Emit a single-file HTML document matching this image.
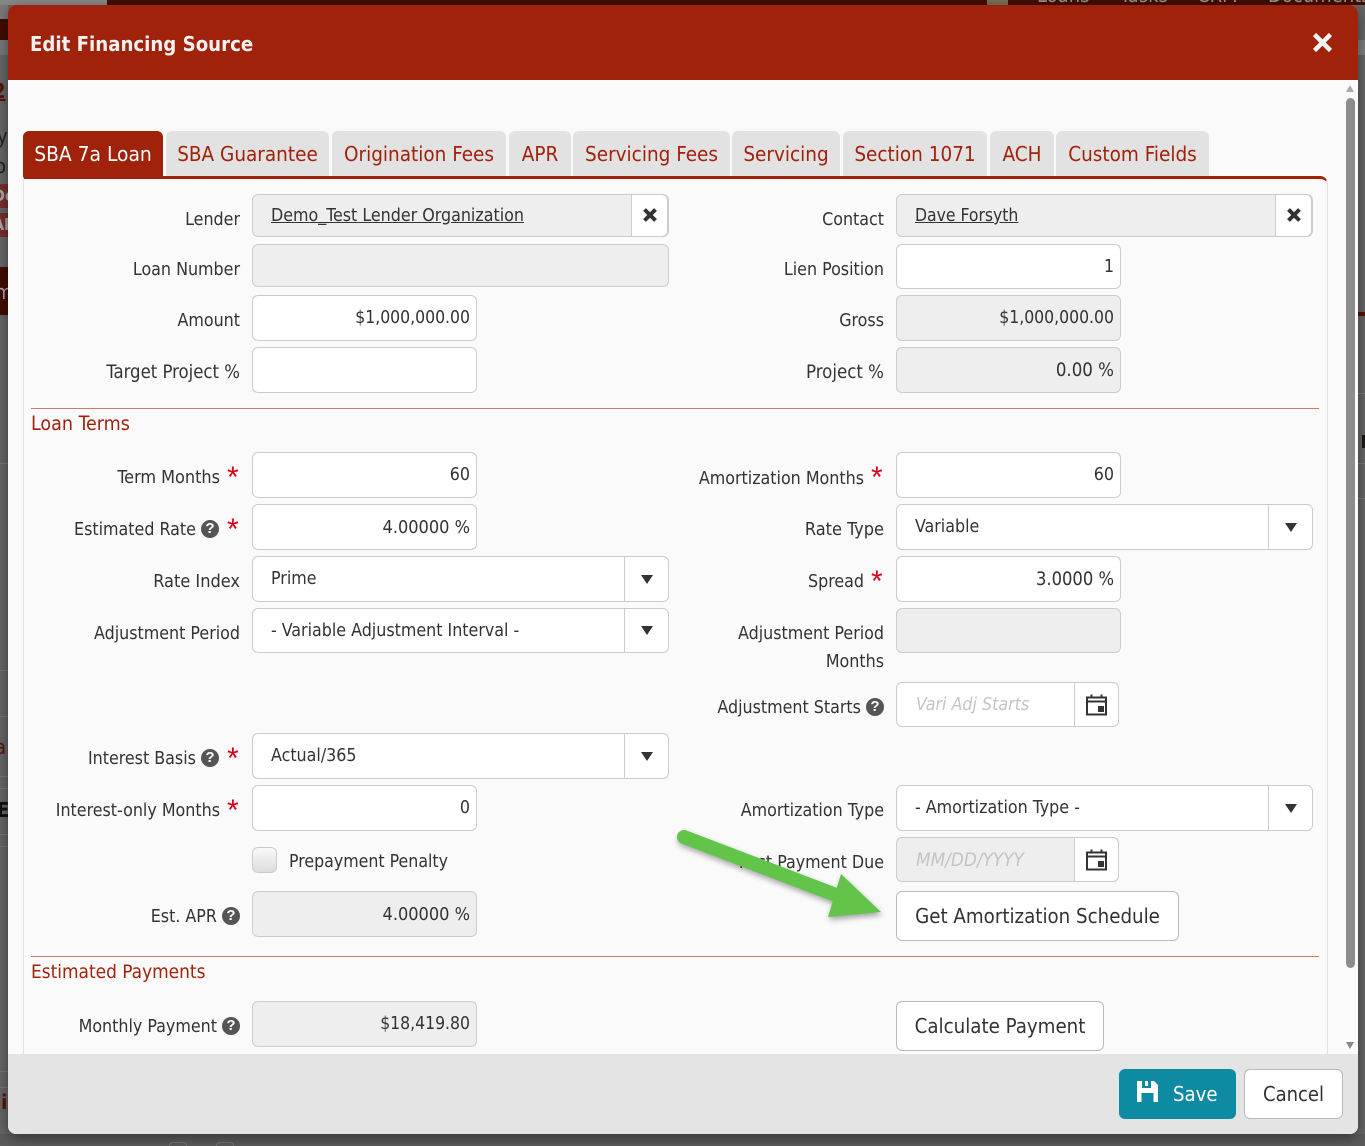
<!DOCTYPE html>
<html><head><meta charset="utf-8"><title>Edit Financing Source</title>
<style>
html,body{margin:0;padding:0;width:1365px;height:1146px;overflow:hidden;background:#666}
*{box-sizing:border-box}
body{position:relative;font-family:"DejaVu Sans Condensed","DejaVu Sans","Liberation Sans",sans-serif;font-stretch:condensed;font-size:17.700px;color:#333}
.a{position:absolute}
.l{position:absolute;text-align:right;white-space:nowrap;height:24px;line-height:24px;color:#333}
.lc{left:20px;width:220px}
.rc{left:640px;width:244px}
.f{position:absolute;background:#fff;border:1px solid #ccc;border-radius:6px;line-height:45px;padding:0 6px;white-space:nowrap}
.r{text-align:right}
.d{background:#eee}
.q{display:inline-block;width:18px;height:18px;border-radius:50%;background:#555;color:#fff;font:bold 15px/18px "Liberation Sans",sans-serif;text-align:center;vertical-align:2px;font-stretch:normal}
.s{position:absolute;color:#d9001b;font:30px/30px "Liberation Sans",sans-serif;font-stretch:normal;margin-top:-4px;margin-left:-1px}
.t{position:absolute;top:131px;height:45px;background:#e2e2e2;border-radius:6px 6px 0 0;color:#a0220a;font-size:20.500px;line-height:47px;text-align:center;white-space:nowrap}
.h{position:absolute;left:31px;color:#a0220a;font-size:19px;line-height:24px;white-space:nowrap}
.hr{position:absolute;left:31px;width:1288px;height:1px;background:#d27a68}
.sep{position:absolute;top:0;bottom:0;width:1px;background:#ccc}
.tri{position:absolute;width:0;height:0;border-left:6.500px solid transparent;border-right:6.500px solid transparent;border-top:9px solid #333}
.b{position:absolute;background:#fff;border:1px solid #bbb;border-radius:6px;text-align:center;color:#333;font-size:20.300px;white-space:nowrap}
.bg{position:absolute;white-space:nowrap;line-height:20px}
.ln{position:absolute;left:0;width:8px;height:1px;background:#7c7c7c}
.rn{position:absolute;left:1358px;width:7px;height:1px;background:#7c7c7c}
</style></head><body>

<!-- backdrop -->
<div class="a" style="left:0;top:0;width:107px;height:5px;background:#888"></div>
<div class="a" style="left:107px;top:0;width:1258px;height:5px;background:#420c02"></div>
<div class="a" style="left:987px;top:0;width:21px;height:5px;background:#7a7058"></div>
<div class="bg" style="left:1037px;top:-15px;color:#9c948a;font-size:20px">Loans</div>
<div class="bg" style="left:1120px;top:-15px;color:#9c948a;font-size:20px">Tasks</div>
<div class="bg" style="left:1197px;top:-15px;color:#9c948a;font-size:20px">CRM</div>
<div class="bg" style="left:1268px;top:-15px;color:#9c948a;font-size:20px">Documents</div>
<div class="a" style="left:0;top:5px;width:8px;height:50px;background:#7a7a7a"></div>
<div class="a" style="left:0;top:19px;width:8px;height:21px;background:#420c02"></div>
<div class="a" style="left:0;top:184px;width:8px;height:24px;background:#7a2f2a"></div>
<div class="a" style="left:0;top:213px;width:8px;height:24px;background:#7a2f2a"></div>
<div class="a" style="left:0;top:267px;width:8px;height:48px;background:#420c02"></div>
<div class="bg" style="left:-7px;top:81px;color:#5a1208;font-weight:bold;text-decoration:underline;font-size:20px">2</div>
<div class="bg" style="left:-3px;top:126px;color:#222;font-size:20px">y</div>
<div class="bg" style="left:-5px;top:156px;color:#222;font-size:20px">o</div>
<div class="bg" style="left:-7px;top:186px;color:#aaa;font-size:16px;font-weight:bold">De</div>
<div class="bg" style="left:-7px;top:215px;color:#aaa;font-size:16px;font-weight:bold">Al</div>
<div class="bg" style="left:-5px;top:282px;color:#aaa;font-size:20px">m</div>
<div class="bg" style="left:-5px;top:737px;color:#5a1208;font-size:20px">a</div>
<div class="bg" style="left:-3px;top:800px;color:#111;font-size:20px;font-weight:bold">E</div>
<div class="bg" style="left:-5px;top:1092px;color:#5a1208;font-size:20px;font-weight:bold">ii</div>
<div class="ln" style="top:463px"></div><div class="ln" style="top:670px"></div><div class="ln" style="top:716px"></div><div class="ln" style="top:776px"></div><div class="ln" style="top:788px"></div><div class="ln" style="top:834px"></div><div class="ln" style="top:846px"></div><div class="ln" style="top:1071px"></div><div class="ln" style="top:1087px"></div>
<div class="a" style="left:1358px;top:40px;width:7px;height:15px;background:#808080"></div>
<div class="a" style="left:1358px;top:312px;width:7px;height:4px;background:#5a1208"></div>
<div class="rn" style="top:393px"></div><div class="rn" style="top:463px"></div><div class="rn" style="top:498px"></div>
<div class="a" style="left:1362px;top:435px;width:3px;height:13px;background:#1c1a18"></div>
<div class="a" style="left:0;top:1134px;width:1365px;height:12px;background:#5c5c5c"></div>
<div class="a" style="left:169px;top:1142px;width:18px;height:4px;border:1px solid #777;border-bottom:0;border-radius:5px 5px 0 0"></div>
<div class="a" style="left:216px;top:1142px;width:18px;height:4px;border:1px solid #777;border-bottom:0;border-radius:5px 5px 0 0"></div>

<!-- modal -->
<div class="a" style="left:8px;top:5px;width:1350px;height:1129px;background:#fafafa;border-radius:8px;overflow:hidden;box-shadow:0 4px 14px rgba(0,0,0,.45)">
  <div class="a" style="left:0;top:0;width:1350px;height:75px;background:#a0220a"></div>
  <div class="a" style="left:22px;top:25px;color:#f2f2f2;font-size:20.200px;font-weight:bold;line-height:28px;white-space:nowrap">Edit Financing Source</div>
  <div class="a" style="left:0;top:1049px;width:1350px;height:80px;background:#e4e4e4"></div>
</div>
<svg class="a" style="left:1312px;top:32px" width="21" height="21" viewBox="0 0 21 21"><path d="M2.500 2.500L18.500 18.500M18.500 2.500L2.500 18.500" stroke="#f4f4f4" stroke-width="4.500"/></svg>

<!-- scrollbar -->
<div class="a" style="left:1346px;top:98px;width:9px;height:870px;background:#8c8c8c;border-radius:5px"></div>
<div class="a" style="left:1346px;top:85px;width:0;height:0;border-left:4.500px solid transparent;border-right:4.500px solid transparent;border-bottom:7px solid #aaa"></div>
<div class="a" style="left:1346px;top:1042px;width:0;height:0;border-left:4.500px solid transparent;border-right:4.500px solid transparent;border-top:7px solid #888"></div>

<!-- panel -->
<div class="a" style="left:23px;top:176px;width:1305px;height:878px;border:1px solid #e2e2e2;border-top:3px solid #a0220a;border-bottom:0;border-radius:0 8px 0 0"></div>
<div class="t" style="left:23px;width:140px;height:46px;background:#a0220a;color:#fff;font-size:20.800px">SBA 7a Loan</div>
<div class="t" style="left:166px;width:163px">SBA Guarantee</div>
<div class="t" style="left:332px;width:174px">Origination Fees</div>
<div class="t" style="left:509px;width:62px">APR</div>
<div class="t" style="left:573px;width:157px">Servicing Fees</div>
<div class="t" style="left:732px;width:108px">Servicing</div>
<div class="t" style="left:843px;width:144px">Section 1071</div>
<div class="t" style="left:990px;width:64px">ACH</div>
<div class="t" style="left:1056px;width:153px">Custom Fields</div>

<!-- row: lender/contact -->
<div class="l lc" style="top:208px">Lender</div>
<div class="f d" style="left:252px;top:194px;width:417px;height:43px;padding-left:18px;line-height:43px"><u>Demo_Test Lender Organization</u><div class="a" style="right:0;top:-1px;width:37px;height:43px;background:#fff;border:1px solid #ccc;border-radius:0 6px 6px 0"></div></div>
<svg class="a" style="left:642px;top:207px" width="16" height="16" viewBox="0 0 16 16"><path d="M2.500 2.500L13.500 13.500M13.500 2.500L2.500 13.500" stroke="#333" stroke-width="4"/></svg>
<div class="l rc" style="top:208px">Contact</div>
<div class="f d" style="left:896px;top:194px;width:417px;height:43px;padding-left:18px;line-height:43px;font-size:17.400px"><u>Dave Forsyth</u><div class="a" style="right:0;top:-1px;width:37px;height:43px;background:#fff;border:1px solid #ccc;border-radius:0 6px 6px 0"></div></div>
<svg class="a" style="left:1286px;top:207px" width="16" height="16" viewBox="0 0 16 16"><path d="M2.500 2.500L13.500 13.500M13.500 2.500L2.500 13.500" stroke="#333" stroke-width="4"/></svg>

<div class="l lc" style="top:258px">Loan Number</div>
<div class="f d" style="left:252px;top:244px;width:417px;height:43px"></div>
<div class="l rc" style="top:258px">Lien Position</div>
<div class="f r" style="left:896px;top:244px;width:225px;height:45px;line-height:44px">1</div>

<div class="l lc" style="top:309px">Amount</div>
<div class="f r" style="left:252px;top:295px;width:225px;height:46px;font-size:17.450px">$1,000,000.00</div>
<div class="l rc" style="top:309px">Gross</div>
<div class="f r d" style="left:896px;top:295px;width:225px;height:46px;font-size:17.450px">$1,000,000.00</div>

<div class="l lc" style="top:361px;font-size:18.400px">Target Project %</div>
<div class="f" style="left:252px;top:347px;width:225px;height:46px"></div>
<div class="l rc" style="top:361px;font-size:18.500px">Project %</div>
<div class="f r d" style="left:896px;top:347px;width:225px;height:46px;font-size:18.500px">0.00 %</div>

<div class="hr" style="top:408px"></div>
<div class="h" style="top:412px;font-size:19.500px">Loan Terms</div>

<div class="l" style="left:20px;width:200px;top:466px;font-size:17.900px">Term Months</div><div class="s" style="left:228px;top:467px">*</div>
<div class="f r" style="left:252px;top:452px;width:225px;height:46px">60</div>
<div class="l" style="left:640px;width:224px;top:467px">Amortization Months</div><div class="s" style="left:872px;top:467px">*</div>
<div class="f r" style="left:896px;top:452px;width:225px;height:46px">60</div>

<div class="l" style="left:20px;width:199px;top:518px">Estimated Rate <span class="q">?</span></div><div class="s" style="left:228px;top:519px">*</div>
<div class="f r" style="left:252px;top:504px;width:225px;height:46px;font-size:18px">4.00000 %</div>
<div class="l rc" style="top:518px;font-size:18px">Rate Type</div>
<div class="f" style="left:896px;top:504px;width:417px;height:46px;padding-left:18px">Variable<div class="sep" style="right:43px"></div><div class="tri" style="right:15px;top:18px"></div></div>

<div class="l lc" style="top:570px;font-size:18px">Rate Index</div>
<div class="f" style="left:252px;top:556px;width:417px;height:46px;padding-left:18px">Prime<div class="sep" style="right:43px"></div><div class="tri" style="right:15px;top:18px"></div></div>
<div class="l" style="left:640px;width:224px;top:570px">Spread</div><div class="s" style="left:872px;top:571px">*</div>
<div class="f r" style="left:896px;top:556px;width:225px;height:46px;font-size:18.200px">3.0000 %</div>

<div class="l lc" style="top:622px">Adjustment Period</div>
<div class="f" style="left:252px;top:608px;width:417px;height:45px;padding-left:18px">- Variable Adjustment Interval -<div class="sep" style="right:43px"></div><div class="tri" style="right:15px;top:17px"></div></div>
<div class="l rc" style="top:622px">Adjustment Period</div>
<div class="l rc" style="top:650px">Months</div>
<div class="f d" style="left:896px;top:608px;width:225px;height:45px"></div>

<div class="l rc" style="top:696px">Adjustment Starts <span class="q">?</span></div>
<div class="f" style="left:896px;top:682px;width:223px;height:45px;padding-left:19px;color:#c4c4c4;font-style:italic;font-size:17.700px">Vari Adj Starts<div class="sep" style="right:43px"></div></div>
<svg class="a" style="left:1085px;top:693px" width="23" height="23" viewBox="0 0 23 23"><path d="M2 4.500H21V21.500H2ZM2 8.500H21M6.500 1.500V5M16.500 1.500V5" fill="none" stroke="#333" stroke-width="2"/><rect x="13" y="13" width="6" height="6" fill="#333"/></svg>

<div class="l" style="left:20px;width:199px;top:747px">Interest Basis <span class="q">?</span></div><div class="s" style="left:228px;top:748px">*</div>
<div class="f" style="left:252px;top:733px;width:417px;height:46px;padding-left:18px">Actual/365<div class="sep" style="right:43px"></div><div class="tri" style="right:15px;top:18px"></div></div>

<div class="l" style="left:20px;width:200px;top:799px">Interest-only Months</div><div class="s" style="left:228px;top:800px">*</div>
<div class="f r" style="left:252px;top:785px;width:225px;height:46px">0</div>
<div class="l rc" style="top:799px">Amortization Type</div>
<div class="f" style="left:896px;top:785px;width:417px;height:46px;padding-left:18px">- Amortization Type -<div class="sep" style="right:43px"></div><div class="tri" style="right:15px;top:18px"></div></div>

<div class="a" style="left:252px;top:847px;width:25px;height:26px;border:1px solid #ccc;border-radius:6px;background:linear-gradient(#fafafa,#dcdcdc)"></div>
<div class="l" style="left:289px;top:850px;text-align:left;font-size:17.600px">Prepayment Penalty</div>
<div class="l rc" style="top:851px">First Payment Due</div>
<div class="f d" style="left:896px;top:837px;width:223px;height:45px;padding-left:19px;color:#c4c4c4;font-style:italic;font-size:18.800px">MM/DD/YYYY<div class="a" style="right:0;top:0;bottom:0;width:44px;background:#fff;border-radius:0 6px 6px 0;border-left:1px solid #ccc"></div></div>
<svg class="a" style="left:1085px;top:848px" width="23" height="23" viewBox="0 0 23 23"><path d="M2 4.500H21V21.500H2ZM2 8.500H21M6.500 1.500V5M16.500 1.500V5" fill="none" stroke="#333" stroke-width="2"/><rect x="13" y="13" width="6" height="6" fill="#333"/></svg>

<div class="l lc" style="top:905px">Est. APR <span class="q">?</span></div>
<div class="f r d" style="left:252px;top:891px;width:225px;height:46px;font-size:18px">4.00000 %</div>
<div class="b" style="left:896px;top:891px;width:283px;height:50px;line-height:49px">Get Amortization Schedule</div>

<div class="hr" style="top:956px"></div>
<div class="h" style="top:960px;font-size:18.900px">Estimated Payments</div>

<div class="l lc" style="top:1015px">Monthly Payment <span class="q">?</span></div>
<div class="f r d" style="left:252px;top:1001px;width:225px;height:46px;font-size:17.450px">$18,419.80</div>
<div class="b" style="left:896px;top:1001px;width:208px;height:50px;line-height:49px">Calculate Payment</div>

<!-- footer buttons -->
<div class="a" style="left:1119px;top:1069px;width:117px;height:50px;background:#0e8ba3;border-radius:6px;color:#fff;font-size:20.200px;line-height:50px;padding-left:54px">Save</div>
<svg class="a" style="left:1137px;top:1081px" width="21" height="21" viewBox="0 0 21 21"><path fill="#fff" fill-rule="evenodd" d="M0 0H17L21 4V21H0ZM5 0V7H14V0H11V5H8V0ZM4.500 12V21H16.500V12Z"/></svg>
<div class="b" style="left:1244px;top:1069px;width:99px;height:50px;line-height:49px;font-size:20px">Cancel</div>

<!-- green arrow -->
<svg class="a" style="left:660px;top:820px;filter:drop-shadow(1px 3px 3px rgba(0,0,0,.35))" width="240" height="110" viewBox="0 0 240 110"><path d="M24 17L176 75" stroke="#62c448" stroke-width="14" stroke-linecap="round"/><path d="M181 54L221 92L168 97Z" fill="#62c448"/></svg>

</body></html>
